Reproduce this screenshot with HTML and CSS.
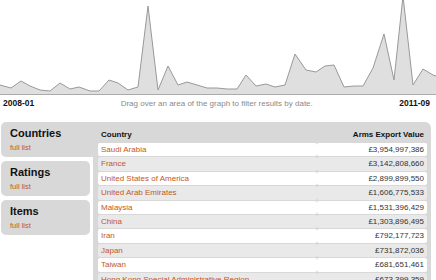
FILE: index.html
```html
<!DOCTYPE html>
<html lang="en">
<head>
    <meta charset="UTF-8">
    <meta name="viewport" content="width=device-width, initial-scale=1.0">
    <title>Arms Exports</title>
    <link rel="stylesheet" href="styles.css">
</head>
<body>
    <div class="timeline">
        <svg class="graph" width="436" height="96" viewBox="0 0 436 96">
            <path class="graph-fill" d="M0,94 L0,85 11,88 21,81 30,86 40,90 50,91 60,83 70,89 79,87 90,91 99,91 109,80 118,83 128,90 138,87 148,6 158,90 168,66 178,85 187,82 197,85 207,88 217,88 227,89 237,89 246,75 256,86 266,84 275,87 285,85 295,54 306,70 316,72 325,66 334,65 344,87 354,86 363,86 373,68 384,34 394,80 403,-4 413,85 423,69 433,75 436,76 L436,94 Z"/>
            <polyline class="graph-line" points="0,85 11,88 21,81 30,86 40,90 50,91 60,83 70,89 79,87 90,91 99,91 109,80 118,83 128,90 138,87 148,6 158,90 168,66 178,85 187,82 197,85 207,88 217,88 227,89 237,89 246,75 256,86 266,84 275,87 285,85 295,54 306,70 316,72 325,66 334,65 344,87 354,86 363,86 373,68 384,34 394,80 403,-4 413,85 423,69 433,75 436,76"/>
            <line class="graph-base" x1="0" y1="94.5" x2="436" y2="94.5"/>
        </svg>
        <div class="dates">
            <span class="date">2008-01</span>
            <span class="hint">Drag over an area of the graph to filter results by date.</span>
            <span class="date">2011-09</span>
        </div>
    </div>

    <div class="browser">
        <ul class="tabs">
            <li class="tab active">
                <h2>Countries</h2>
                <a href="#">full list</a>
            </li>
            <li class="tab">
                <h2>Ratings</h2>
                <a href="#">full list</a>
            </li>
            <li class="tab">
                <h2>Items</h2>
                <a href="#">full list</a>
            </li>
        </ul>

        <div class="panel">
            <table class="results">
                <thead>
                    <tr>
                        <th>Country</th>
                        <th class="value">Arms Export Value</th>
                    </tr>
                </thead>
                <tbody>
                    <tr><td><a href="#">Saudi Arabia</a></td><td class="value">&pound;3,954,997,386</td></tr>
                    <tr><td><a href="#">France</a></td><td class="value">&pound;3,142,808,660</td></tr>
                    <tr><td><a href="#">United States of America</a></td><td class="value">&pound;2,899,899,550</td></tr>
                    <tr><td><a href="#">United Arab Emirates</a></td><td class="value">&pound;1,606,775,533</td></tr>
                    <tr><td><a href="#">Malaysia</a></td><td class="value">&pound;1,531,396,429</td></tr>
                    <tr><td><a href="#">China</a></td><td class="value">&pound;1,303,896,495</td></tr>
                    <tr><td><a href="#">Iran</a></td><td class="value">&pound;792,177,723</td></tr>
                    <tr><td><a href="#">Japan</a></td><td class="value">&pound;731,872,036</td></tr>
                    <tr><td><a href="#">Taiwan</a></td><td class="value">&pound;681,651,461</td></tr>
                    <tr><td><a href="#">Hong Kong Special Administrative Region</a></td><td class="value">&pound;673,399,359</td></tr>
                    <tr><td><a href="#">India</a></td><td class="value">&pound;612,045,870</td></tr>
                </tbody>
            </table>
        </div>
    </div>
</body>
</html>
```

FILE: styles.css
```css
body {
    font-family: 'Liberation Sans', Arial, Helvetica, sans-serif;
    color: #222;
    background-color: #fff;
    margin: 0;
    padding: 0;
    width: 436px;
    height: 280px;
    overflow: hidden;
}

a {
    color: #c4581c;
    text-decoration: none;
}

.graph {
    display: block;
}

.graph-fill {
    fill: #dfdfdf;
}

.graph-line {
    fill: none;
    stroke: #999;
    stroke-width: 1;
    stroke-linejoin: round;
}

.graph-base {
    stroke: #aaa;
    stroke-width: 1;
}

.dates {
    display: flex;
    justify-content: space-between;
    align-items: center;
    height: 14px;
    padding: 0 6px 0 3px;
    margin-bottom: 12px;
}

.date {
    font-size: 8.5px;
    font-weight: bold;
    color: #111;
}

.hint {
    font-size: 8px;
    color: #8a8a8a;
}

.browser {
    display: flex;
    align-items: flex-start;
    gap: 3px;
    padding: 0 5px 0 1px;
}

.tabs {
    list-style: none;
    margin: 0;
    padding: 0;
    width: 89px;
    flex-shrink: 0;
    display: flex;
    flex-direction: column;
    gap: 4px;
}

.tab {
    background-color: #d8d8d8;
    border-radius: 5px;
    height: 35px;
    box-sizing: border-box;
    padding: 5px 9px 4px;
}

.tab.active {
    margin-right: -3px;
    border-radius: 5px 0 0 5px;
}

.tab h2 {
    margin: 0;
    font-size: 11px;
    line-height: 13px;
    font-weight: bold;
    color: #111;
}

.tab a {
    display: block;
    margin-top: 2px;
    font-size: 7.5px;
    line-height: 11px;
}

.panel {
    flex: 1;
    background-color: #d8d8d8;
    border-radius: 0 6px 0 0;
    padding: 0 4px 0 5px;
    height: 170px;
}

.results {
    width: 100%;
    border-collapse: separate;
    border-spacing: 0 1px;
    font-size: 8px;
}

.results th {
    text-align: left;
    font-weight: bold;
    color: #111;
    line-height: 13px;
    padding: 5px 3px 1px;
}

.results td {
    line-height: 13.4px;
    padding: 0 3px;
    background-color: #fff;
    border-radius: 2px;
    white-space: nowrap;
}

.results tbody tr:nth-child(even) td {
    background-color: #e9e9e9;
}

.results .value {
    text-align: right;
    width: 104px;
    color: #333;
}

.results th.value {
    color: #111;
}
```
